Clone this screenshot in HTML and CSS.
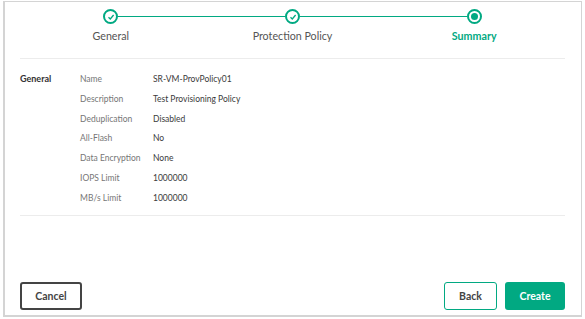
FILE: index.html
```html
<!DOCTYPE html>
<html lang="en">
<head>
    <meta charset="UTF-8">
    <title>Create Provisioning Policy</title>
    <link rel="stylesheet" href="styles.css">
</head>
<body>
    <div class="wizard">
        <div class="steps">
            <div class="step first done">
                <div class="track">
                    <span class="line"></span>
                    <span class="dot">
                        <svg width="8" height="8" viewBox="0 0 8 8"><path d="M1.5 4.2 L3.3 6 L6.6 2" fill="none" stroke="#01a982" stroke-width="1.3"/></svg>
                    </span>
                    <span class="line"></span>
                </div>
                <div class="step-label">General</div>
            </div>
            <div class="step done">
                <div class="track">
                    <span class="line"></span>
                    <span class="dot">
                        <svg width="8" height="8" viewBox="0 0 8 8"><path d="M1.5 4.2 L3.3 6 L6.6 2" fill="none" stroke="#01a982" stroke-width="1.3"/></svg>
                    </span>
                    <span class="line"></span>
                </div>
                <div class="step-label">Protection Policy</div>
            </div>
            <div class="step last active">
                <div class="track">
                    <span class="line"></span>
                    <span class="dot"><span class="inner"></span></span>
                    <span class="line"></span>
                </div>
                <div class="step-label">Summary</div>
            </div>
        </div>

        <div class="summary">
            <div class="section-title">General</div>
            <dl class="props">
                <dt>Name</dt><dd>SR-VM-ProvPolicy01</dd>
                <dt>Description</dt><dd>Test Provisioning Policy</dd>
                <dt>Deduplication</dt><dd>Disabled</dd>
                <dt>All-Flash</dt><dd>No</dd>
                <dt>Data Encryption</dt><dd>None</dd>
                <dt>IOPS Limit</dt><dd>1000000</dd>
                <dt>MB/s Limit</dt><dd>1000000</dd>
            </dl>
        </div>

        <div class="footer">
            <button class="btn-cancel">Cancel</button>
            <div class="right">
                <button class="btn-back">Back</button>
                <button class="btn-create">Create</button>
            </div>
        </div>
    </div>
</body>
</html>
```

FILE: styles.css
```css
:root {
    --green: #01a982;
    --text: #333333;
    --muted: #767676;
    --rule: #ececec;
}

* {
    margin: 0;
    padding: 0;
    box-sizing: border-box;
}

body {
    font-family: 'Lato', 'Liberation Sans', sans-serif;
    color: var(--text);
    background: #ffffff;
    padding: 1px 3px 2px 3px;
}

.wizard {
    height: 316px;
    border: 1px solid #d4d4d4;
    border-left: 2px solid #d4d4d4;
    border-bottom-width: 2px;
    padding: 0 16px 0 15px;
    display: flex;
    flex-direction: column;
}

/* stepper */
.steps {
    display: flex;
    padding-top: 7px;
    height: 57px;
    border-bottom: 1px solid var(--rule);
}

.step {
    flex: 1;
    display: flex;
    flex-direction: column;
    align-items: center;
}

.track {
    width: 100%;
    display: flex;
    align-items: center;
}

.line {
    flex: 1;
    height: 1px;
    background: var(--green);
}

.first .line:first-child,
.last .line:last-child {
    visibility: hidden;
}

.dot {
    width: 15px;
    height: 15px;
    border: 2px solid var(--green);
    border-radius: 50%;
    display: flex;
    align-items: center;
    justify-content: center;
}

.dot .inner {
    width: 7px;
    height: 7px;
    border-radius: 50%;
    background: var(--green);
}

.step-label {
    margin-top: 5px;
    font-size: 10.7px;
    color: #555555;
}

.active .step-label {
    color: var(--green);
    font-weight: bold;
}

/* summary */
.summary {
    display: flex;
    padding: 13px 0 10px;
    border-bottom: 1px solid var(--rule);
}

.section-title {
    width: 60px;
    font-size: 9px;
    font-weight: bold;
    line-height: 14px;
}

.props {
    display: grid;
    grid-template-columns: 73px auto;
    row-gap: 5.8px;
    font-size: 8.5px;
    line-height: 14px;
}

.props dt {
    color: var(--muted);
}

.props dd {
    color: #3a3a3a;
}

/* buttons */
.footer {
    margin-top: auto;
    padding-bottom: 5px;
    display: flex;
    justify-content: space-between;
    align-items: center;
}

.right {
    display: flex;
    gap: 8px;
}

button {
    height: 28px;
    font-family: inherit;
    font-size: 10.5px;
    font-weight: bold;
    border-radius: 3px;
    background: #ffffff;
    cursor: pointer;
}

.btn-cancel {
    width: 62px;
    border: 2px solid #444444;
    color: #444444;
}

.btn-back {
    width: 53px;
    border: 1px solid var(--green);
    color: #444444;
}

.btn-create {
    width: 60px;
    border: none;
    background: var(--green);
    color: #ffffff;
}
```
